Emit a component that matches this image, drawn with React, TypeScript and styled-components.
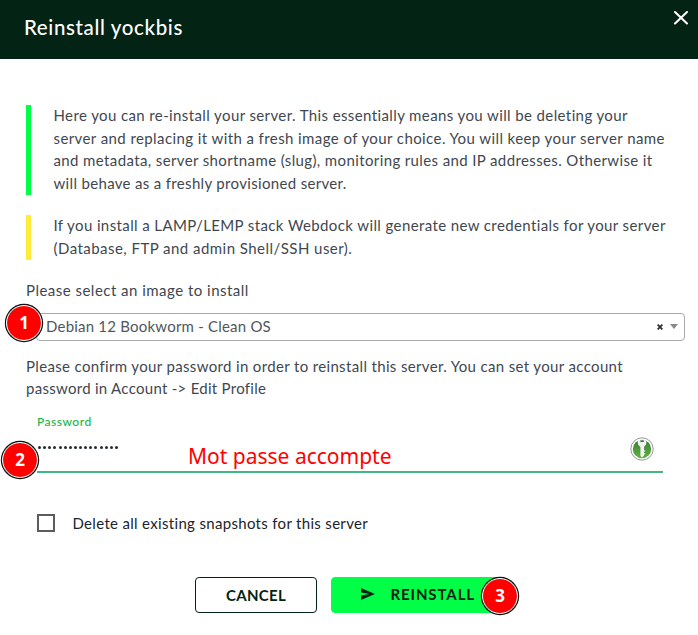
import React from "react";
import styled, { createGlobalStyle } from "styled-components";

const GlobalStyle = createGlobalStyle`
  * { box-sizing: border-box; }
  body { margin: 0; background: #fff; font-family: Lato, "Open Sans", sans-serif; }
`;

const Dialog = styled.main`
  width: 698px;
  height: 635px;
  overflow: hidden;
  background: #fff;
  color: #3f4750;
  font-size: 15px;
  line-height: 22.5px;
`;

const Header = styled.header`
  display: flex;
  justify-content: space-between;
  height: 59px;
  padding: 0 9.5px 0 24px;
  background: #032314;
  color: #fff;
`;

const Title = styled.h1`
  margin: 14px 0 0;
  font-size: 20.5px;
  font-weight: 500;
  line-height: 26px;
  letter-spacing: 0.62px;
`;

const CloseButton = styled.button`
  width: 16px;
  height: 16px;
  margin-top: 10px;
  padding: 0;
  border: 0;
  background: none;
  color: inherit;
  svg { display: block; }
`;

const Body = styled.section`
  display: flex;
  flex-direction: column;
  padding: 46px 13px 0 26px;
`;

const Notice = styled.div<{ $accent: string }>`
  height: max-content;
  margin-bottom: 20px;
  padding: 0 0 1px 22.5px;
  border-left: 5px solid ${(p) => p.$accent};
  > :first-child { margin-top: -1px; }
`;

const Form = styled.form`
  display: flex;
  flex-direction: column;
  margin-top: -1px;
`;

const Line = styled.span<{ $spacing: number }>`
  display: block;
  white-space: nowrap;
  letter-spacing: ${(p) => p.$spacing}px;
`;

const SelectRow = styled.div`
  position: relative;
  margin: 11px 0 14px;
  padding-left: 10px;
`;

const Select = styled.div`
  display: flex;
  align-items: center;
  height: 28px;
  padding: 0 6px 0 9px;
  border: 1px solid #aaa;
  border-radius: 4px;
  color: #50565c;
`;

const SelectIcons = styled.div`
  display: flex;
  align-items: center;
  gap: 7px;
  margin-left: auto;
`;

const Field = styled.div`
  position: relative;
  display: flex;
  flex-direction: column;
  height: 62px;
  margin: 11px 22px 0 11px;
  padding-top: 1px;
  border-bottom: 2px solid #41b883;
`;

const FieldLabel = styled.label`
  color: #16b548;
  font-size: 12px;
  font-weight: 500;
  line-height: 20px;
  letter-spacing: 0.5px;
`;

const FieldValue = styled.div`
  display: flex;
  justify-content: space-between;
  padding: 3px 9px 0 1px;
  > svg { margin-top: 2px; }
`;

const Dots = styled.div`
  display: flex;
  gap: 2.13px;
  padding-top: 11px;
`;

const Dot = styled.i`
  width: 3px;
  height: 3px;
  border-radius: 50%;
  background: #252b33;
`;

const Annotation = styled.span`
  position: absolute;
  left: 151px;
  top: 31px;
  color: #f00;
  font: 400 21px/28px "Noto Sans", sans-serif;
  white-space: nowrap;
`;

const Badge = styled.span<{ $left: number; $top: number }>`
  position: absolute;
  left: ${(p) => p.$left}px;
  top: ${(p) => p.$top}px;
  display: grid;
  place-items: center;
  width: 36px;
  height: 36px;
  border: 1px solid #fff;
  border-radius: 50%;
  background: #f00;
  background-clip: padding-box;
  box-shadow: 0 0 0 1.2px #111;
  color: #fff;
  font: 700 17px/20px "Noto Sans", sans-serif;
  letter-spacing: 0;
`;

const CheckRow = styled.label`
  display: flex;
  align-items: center;
  gap: 17.5px;
  margin: 39px 0 0 11px;
  color: #20242a;
`;

const Box = styled.span`
  width: 18px;
  height: 18px;
  border: 2px solid #5c5c5c;
`;

const Actions = styled.footer`
  display: flex;
  gap: 14px;
  margin: 43px 0 0 169px;
`;

const Button = styled.button<{ $primary?: boolean }>`
  position: relative;
  display: flex;
  align-items: center;
  justify-content: ${(p) => (p.$primary ? "flex-start" : "center")};
  gap: 15.5px;
  width: ${(p) => (p.$primary ? 172 : 122)}px;
  height: 36px;
  padding: ${(p) => (p.$primary ? "0 0 2px 29px" : "0")};
  border: 1px solid ${(p) => (p.$primary ? "#00ff47" : "#032314")};
  border-radius: 4px;
  background: ${(p) => (p.$primary ? "#00ff47" : "#fff")};
  color: #032314;
  font: 700 15px/20px Lato, sans-serif;
  letter-spacing: ${(p) => (p.$primary ? 0.9 : 0.3)}px;
`;

const KeyIcon = () => (
  <svg width="24" height="24" viewBox="0 0 24 24">
    <defs>
      <linearGradient id="key-green" x1="0" y1="0" x2="0" y2="1">
        <stop offset="0" stopColor="#397c35" />
        <stop offset="1" stopColor="#62b246" />
      </linearGradient>
    </defs>
    <circle cx="12" cy="12" r="11.2" fill="#fff" stroke="#8a8a8a" strokeWidth="0.9" />
    <circle cx="12" cy="12" r="9.2" fill="url(#key-green)" />
    <path
      d="M7.6 3.6Q12 1.4 16.4 3.6L16.2 7.2L14 10V18.5L12.2 20.6L10.4 19V10L8 7.6Z"
      fill="#f1f3ef"
    />
    <rect x="10.2" y="3.3" width="3.8" height="1.8" rx="0.8" fill="#397c35" />
    <path d="M14 13.2h1.2v1.3H14zM14 16h1.2v1.2H14z" fill="#f1f3ef" />
  </svg>
);

const infoLines: [string, number][] = [
  ["Here you can re-install your server. This essentially means you will be deleting your", 0.39],
  ["server and replacing it with a fresh image of your choice. You will keep your server name", 0.41],
  ["and metadata, server shortname (slug), monitoring rules and IP addresses. Otherwise it", 0.38],
  ["will behave as a freshly provisioned server.", 0.33],
];

const warningLines: [string, number][] = [
  ["If you install a LAMP/LEMP stack Webdock will generate new credentials for your server", 0.39],
  ["(Database, FTP and admin Shell/SSH user).", 0.46],
];

export default function App() {
  return (
    <>
      <GlobalStyle />
      <Dialog>
        <Header>
          <Title>Reinstall yockbis</Title>
          <CloseButton aria-label="Close">
            <svg width="16" height="16" viewBox="0 0 16 16" stroke="#fff" strokeWidth="2.1" strokeLinecap="round">
              <path d="M2 2L14 13.5M14 2L2 13.5" />
            </svg>
          </CloseButton>
        </Header>
        <Body>
          <Notice $accent="#00ff47">
            {infoLines.map(([text, spacing]) => (
              <Line key={text} $spacing={spacing}>{text}</Line>
            ))}
          </Notice>
          <Notice $accent="#ffeb3b">
            {warningLines.map(([text, spacing]) => (
              <Line key={text} $spacing={spacing}>{text}</Line>
            ))}
          </Notice>
          <Form>
            <Line $spacing={0.48}>Please select an image to install</Line>
            <SelectRow>
              <Select>
                <Line $spacing={0.21}>Debian 12 Bookworm - Clean OS</Line>
                <SelectIcons>
                  <svg width="6" height="6" viewBox="0 0 6 6" stroke="#333" strokeWidth="1.9">
                    <path d="M0.6 0.6L5.4 5.4M5.4 0.6L0.6 5.4" />
                  </svg>
                  <svg width="8" height="5" viewBox="0 0 8 5">
                    <path d="M0 0H8L4 5Z" fill="#888" />
                  </svg>
                </SelectIcons>
              </Select>
              <Badge $left={-20} $top={-8}>1</Badge>
            </SelectRow>
            <Line $spacing={0.35}>
              Please confirm your password in order to reinstall this server. You can set your account
            </Line>
            <Line $spacing={0.28}>password in Account -&gt; Edit Profile</Line>
            <Field>
              <FieldLabel>Password</FieldLabel>
              <FieldValue>
                <Dots>
                  {Array.from({ length: 16 }, (_, i) => (
                    <Dot key={i} />
                  ))}
                </Dots>
                <KeyIcon />
              </FieldValue>
              <Annotation>Mot passe accompte</Annotation>
              <Badge $left={-35} $top={31}>2</Badge>
            </Field>
            <CheckRow>
              <Box />
              <Line $spacing={0.32}>Delete all existing snapshots for this server</Line>
            </CheckRow>
            <Actions>
              <Button type="button">CANCEL</Button>
              <Button type="button" $primary>
                <svg width="14" height="12" viewBox="0 0 14 12">
                  <path d="M0 0L14 6L0 12V7.4L8.6 6L0 4.6Z" fill="#032314" />
                </svg>
                REINSTALL
                <Badge $left={150} $top={0}>3</Badge>
              </Button>
            </Actions>
          </Form>
        </Body>
      </Dialog>
    </>
  );
}
